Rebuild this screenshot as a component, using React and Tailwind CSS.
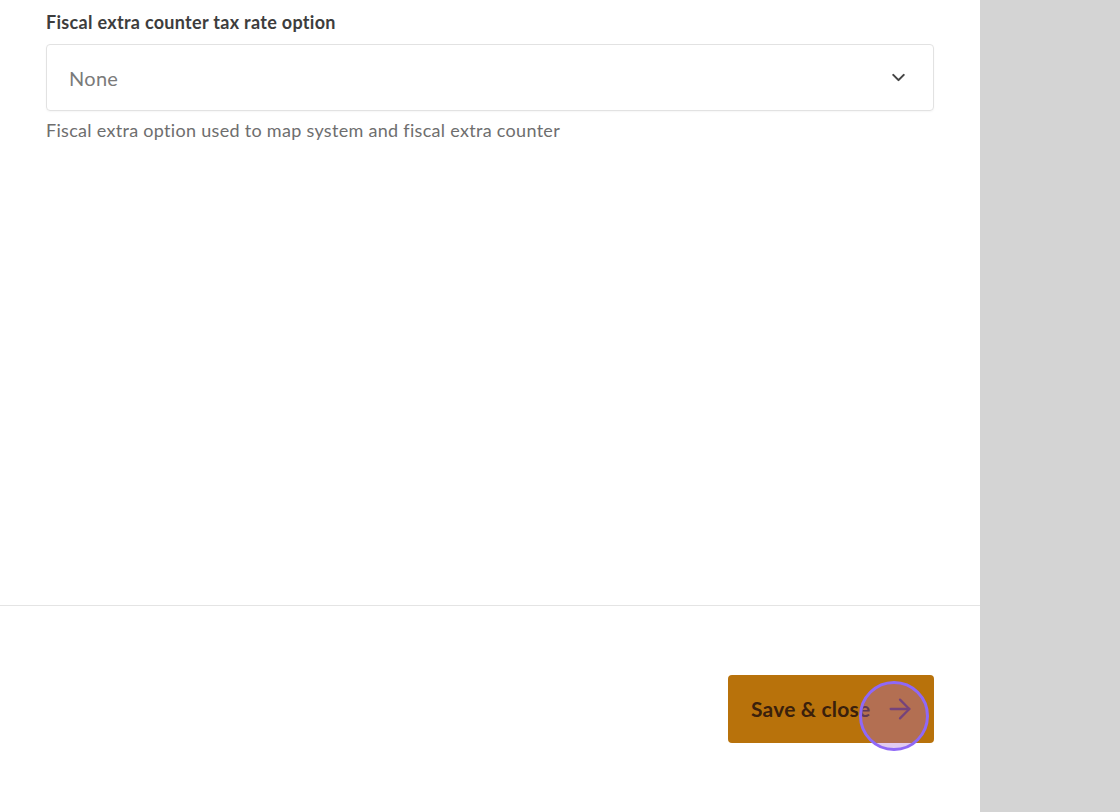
import { ChevronDown, ArrowRight } from "lucide-react";

export default function App() {
  return (
    <div
      className="flex h-[812px] w-[1120px] overflow-hidden bg-[#d4d4d4]"
      style={{ fontFamily: "Lato, 'Noto Sans', sans-serif" }}
    >
      <div className="flex h-full w-[980px] flex-col bg-white">
        <div className="flex-1 px-[46px] pt-[10px]">
          <div className="text-[18px] font-bold leading-[25px] tracking-[0.3px] text-[#3d3d3d]">
            Fiscal extra counter tax rate option
          </div>
          <div className="mt-[9px] flex h-[67px] items-center justify-between rounded-[4px] border border-[#e2e2e2] pl-[22px] pr-[24px] shadow-[0_1px_2px_rgba(0,0,0,0.04)]">
            <span className="text-[20px] tracking-[0.3px] text-[#7a7a7a]">None</span>
            <ChevronDown size={21} strokeWidth={2.4} className="text-[#444]" />
          </div>
          <div className="mt-[7px] text-[18px] leading-[25px] tracking-[0.3px] text-[#6e6e6e]">
            Fiscal extra option used to map system and fiscal extra counter
          </div>
        </div>
        <div className="flex h-[207px] items-start justify-end border-t border-[#e4e4e4] pr-[46px] pt-[69px]">
          <div className="relative">
            <button className="flex h-[68px] w-[206px] items-center gap-[14px] rounded-[4px] bg-[#b8720b] pl-[23px] text-[21px] font-bold tracking-[0.2px] text-[#3a200c]">
              Save &amp; close
              <ArrowRight size={32} strokeWidth={1.7} className="text-[#5a2e4a]" />
            </button>
            <div className="absolute left-[131px] top-[6px] h-[70px] w-[70px] rounded-full border-[3px] border-[#8f68f7] bg-[#a86ad8]/35" />
          </div>
        </div>
      </div>
    </div>
  );
}
